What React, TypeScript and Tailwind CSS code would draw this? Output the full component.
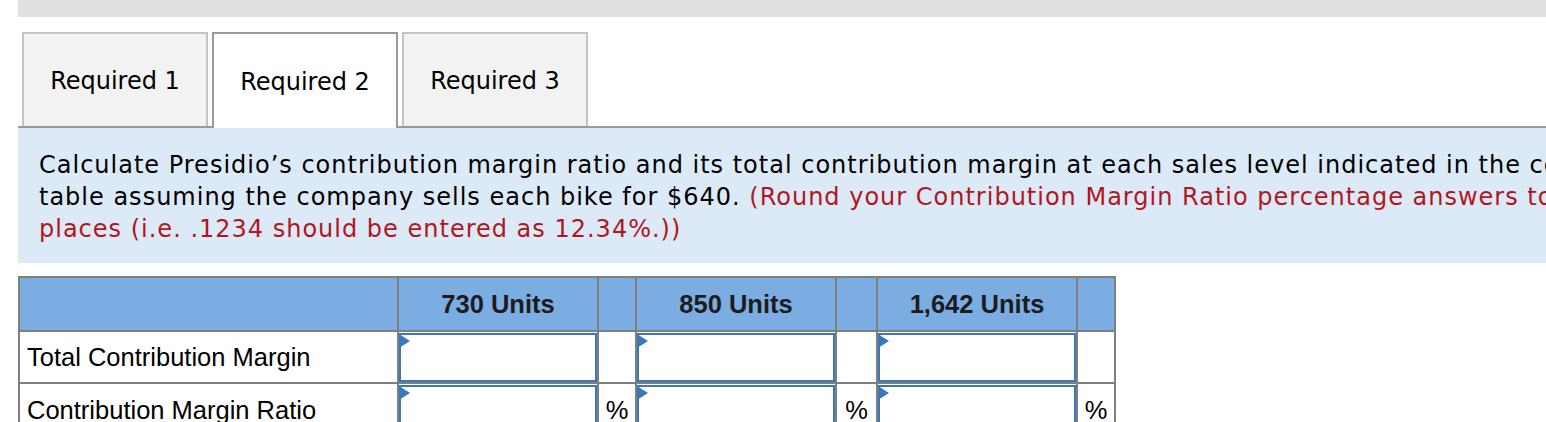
import React from "react";

const TABS = ["Required 1", "Required 2", "Required 3"];
const UNITS = ["730 Units", "850 Units", "1,642 Units"];

function Flag() {
  return (
    <svg
      width="11"
      height="14"
      viewBox="0 0 11 14"
      className="absolute left-[-2px] top-[-1px]"
      aria-hidden="true"
    >
      <polygon points="0,0 11,7 0,14" fill="#3a77bb" />
    </svg>
  );
}

function AnswerBox() {
  return (
    <div className="relative h-full bg-white border-2 border-[#3b78b9]">
      <Flag />
    </div>
  );
}

export default function App() {
  const rows = [
    { label: "Total Contribution Margin", pct: false },
    { label: "Contribution Margin Ratio", pct: true },
  ];

  return (
    <div className="w-[1546px] h-[422px] overflow-hidden bg-white pl-[18px]">
      <div className="h-[17px] bg-[#e0e0e0]" />

      {/* tabs */}
      <div className="mt-[15px] flex pl-[4px] border-b-2 border-[#9a9a9a] h-[96px] w-[1600px]">
        {TABS.map((t, i) => {
          const active = i === 1;
          return (
            <div
              key={t}
              className={`mr-[4px] w-[186px] flex items-center justify-center text-[24px] text-black ${
                active
                  ? "bg-white border-2 border-b-0 border-[#9a9a9a] h-[96px] relative z-10"
                  : "bg-[#f2f2f2] border-2 border-b-0 border-[#c4c4c4] h-[94px]"
              }`}
              style={{ fontFamily: '"DejaVu Sans", Verdana, sans-serif' }}
            >
              <span className="pt-[2px]">{t}</span>
            </div>
          );
        })}
      </div>

      {/* instructions */}
      <div
        className="bg-[#dbeaf6] w-[1700px] h-[135px] pl-[21px] pt-[21px] text-[24px] leading-[32px] tracking-[1px] text-black whitespace-nowrap"
        style={{ fontFamily: '"DejaVu Sans", Verdana, sans-serif' }}
      >
        Calculate Presidio’s contribution margin ratio and its total contribution margin at each sales level indicated in the columns of the
        <br />
        table assuming the company sells each bike for $640.{" "}
        <span className="text-[#b3151d]">
          (Round your Contribution Margin Ratio percentage answers to 2 decimal
          <br />
          places (i.e. .1234 should be entered as 12.34%.))
        </span>
      </div>

      {/* table */}
      <div
        className="mt-[13px] w-[1098px] grid grid-cols-[377px_198px_36px_198px_39px_198px_36px] grid-rows-[52px_50px_52px] gap-[2px] p-[2px] bg-[#7f7f7f] text-[25.5px]"
        style={{ fontFamily: '"Liberation Sans", Arial, sans-serif' }}
      >
        <div className="bg-[#7badE2]" />
        {UNITS.map((u) => (
          <React.Fragment key={u}>
            <div className="bg-[#7badE2] flex items-center justify-center font-bold text-[#1c1c1c]">
              {u}
            </div>
            <div className="bg-[#7badE2]" />
          </React.Fragment>
        ))}

        {rows.map((r) => (
          <React.Fragment key={r.label}>
            <div className="bg-white flex items-center pl-[7px] text-black">
              {r.label}
            </div>
            {UNITS.map((u) => (
              <React.Fragment key={u}>
                <div className="bg-white pt-[1px]">
                  <AnswerBox />
                </div>
                <div className="bg-white flex items-center justify-center text-black">
                  {r.pct ? "%" : ""}
                </div>
              </React.Fragment>
            ))}
          </React.Fragment>
        ))}
      </div>
    </div>
  );
}
